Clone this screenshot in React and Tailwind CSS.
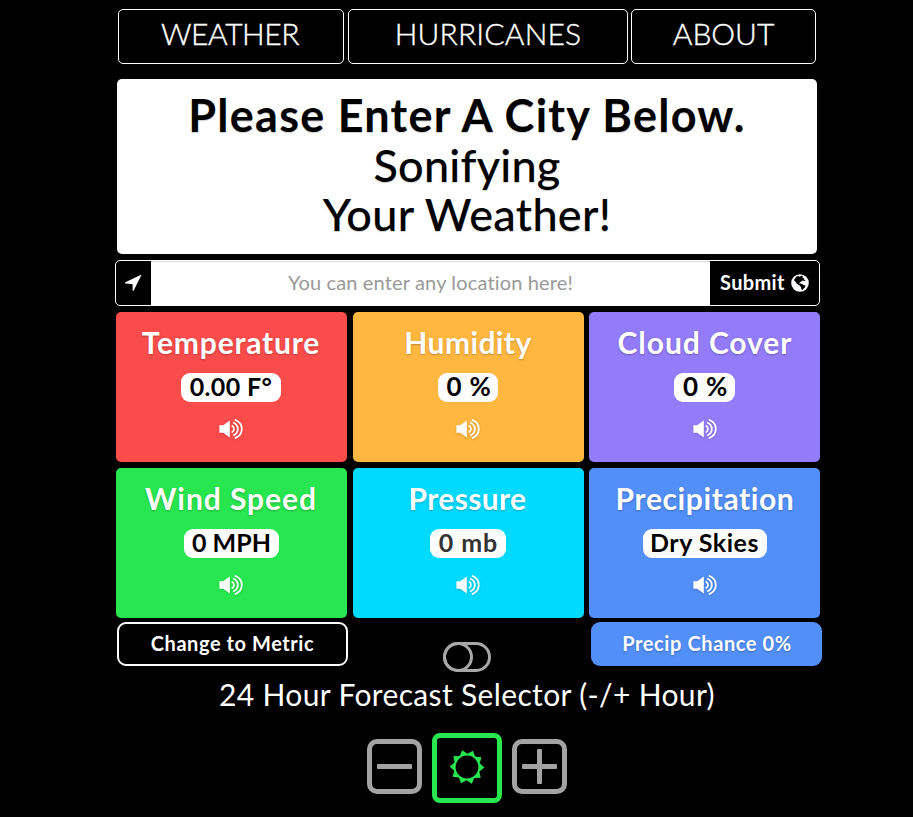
import React from "react";

const SHADOW = "[text-shadow:0_1px_2px_rgba(0,0,0,0.25)]";

function VolumeIcon() {
  return (
    <svg className="mt-[17px] h-5 w-6 drop-shadow-[0_1px_1px_rgba(0,0,0,0.15)]" viewBox="0 0 24 20" fill="none">
      <path d="M0.4 6.2H4.2L10.8 1.6V18.4L4.2 13.8H0.4Z" fill="white" />
      <path d="M12.7 6.6C14.2 7.4 15 8.6 15 10C15 11.4 14.2 12.6 12.7 13.4" stroke="white" strokeWidth="1.7" />
      <path d="M14.2 3.5C17.3 4.8 18.8 7.2 18.8 10C18.8 12.8 17.3 15.2 14.2 16.5" stroke="white" strokeWidth="1.8" />
      <path d="M15.8 0.7C20.5 2.5 22.8 6 22.8 10C22.8 14 20.5 17.5 15.8 19.3" stroke="white" strokeWidth="1.8" />
    </svg>
  );
}

function ArrowIcon() {
  return (
    <svg className="h-[18px] w-[18px]" viewBox="0 0 18 18" fill="white">
      <path d="M16.6 0.9C17.1 0.7 17.4 1 17.2 1.5L9.7 16.5C9.3 17.2 8.6 17 8.6 16.3V10.7C8.6 10.3 8.2 9.9 7.8 9.9L1.6 9.4C0.9 9.3 0.8 8.6 1.4 8.3Z" />
    </svg>
  );
}

function GlobeIcon() {
  return (
    <svg className="mt-px ml-[6px] h-[18px] w-[18px]" viewBox="0 0 18 18">
      <circle cx="9" cy="9" r="8.8" fill="white" />
      <path
        fill="black"
        d="M3.4 5.2L5.6 2.6L7.6 2.1L8.6 3L10 1.8L12.2 1.9L11.2 3.2L12.6 4L13 5.4L14.6 6.4L13.4 7L11.6 6.4L10.3 7.6L9 8.3L8.2 9.4L9.6 9.6L11.2 9.9L12.6 11L14.6 11.8L13.9 13.6L12.3 14.8L11.4 16.2L10.2 14.8L9.9 13L8.6 11.6L7 10.4L5.4 9.3L4.4 7.6L3.2 6.8Z"
      />
    </svg>
  );
}

function SunIcon() {
  const points = Array.from({ length: 20 }, (_, i) => {
    const angle = ((2 + i * 18) * Math.PI) / 180;
    const r = i % 2 === 0 ? 17.4 : 13.2;
    return `${(18 + r * Math.cos(angle)).toFixed(2)} ${(18 + r * Math.sin(angle)).toFixed(2)}`;
  });
  return (
    <svg className="mb-[3px] h-9 w-9" viewBox="0 0 36 36">
      <path d={`M${points.join("L")}Z`} fill="#28e64f" />
      <circle cx="18" cy="18" r="11.4" fill="black" />
    </svg>
  );
}

const cards = [
  { title: "Temperature", value: "0.00 F°", bg: "bg-[#fb4c4c] pr-px", track: "tracking-[0.8px]", pill: "w-[100px] tracking-[0.38px]" },
  { title: "Humidity", value: "0 %", bg: "bg-[#ffb740]", track: "tracking-[0.4px]", pill: "w-[60px] pl-[2px] text-[26px] tracking-[0.7px]" },
  { title: "Cloud Cover", value: "0 %", bg: "bg-[#937cf9]", track: "tracking-[0.93px] pl-px", pill: "w-[61px] pl-[2px] text-[26px] tracking-[0.7px]" },
  { title: "Wind Speed", value: "0 MPH", bg: "bg-[#28e64f] pr-px", track: "tracking-[0.94px]", pill: "w-[95px] pl-px tracking-[0.05px]" },
  { title: "Pressure", value: "0 mb", bg: "bg-[#00dafe]", track: "tracking-[0.35px] pr-px", pill: "w-[76px] pl-px tracking-[0.95px] text-[#333]" },
  { title: "Precipitation", value: "Dry Skies", bg: "bg-[#538ff9]", track: "tracking-[0.6px] pl-px", pill: "w-[124px] tracking-[0.5px]" },
];

function Card({ title, value, bg, track, pill }) {
  return (
    <section className={`flex h-[150px] flex-col items-center rounded-[5px] pt-[14px] ${bg}`}>
      <h2 className={`text-[30px] leading-[33px] font-bold text-white ${track} ${SHADOW}`}>{title}</h2>
      <div className="mt-[14px] h-[29px] text-[25px]">
        <div className={`h-[29px] rounded-[9px] bg-white text-center leading-[27px] font-bold whitespace-nowrap ${pill}`}>{value}</div>
      </div>
      <VolumeIcon />
    </section>
  );
}

export default function App() {
  return (
    <div className="flex h-[817px] w-[913px] flex-col overflow-hidden bg-black pl-[115px] font-['Lato',sans-serif] text-black">
      <nav className="mt-[9px] ml-[3px] flex text-center text-[30px] leading-9 font-light text-white [-webkit-text-stroke:0.4px_white]">
        <a className="h-[55px] w-[226px] rounded-[5px] border border-white pt-[5px] pr-[2px] tracking-[-0.45px]">WEATHER</a>
        <a className="ml-1 h-[55px] w-[280px] rounded-[5px] border border-white pt-[5px] tracking-[0.2px]">HURRICANES</a>
        <a className="ml-[3px] h-[55px] w-[185px] rounded-[5px] border border-white pt-[5px]">ABOUT</a>
      </nav>

      <header className="mt-[15px] ml-[2px] h-[175px] w-[700px] rounded-[5px] bg-white pt-[12px] text-center text-[45px] leading-[49.5px] font-medium [text-shadow:0_1px_1px_rgba(0,0,0,0.2)]">
        <h1 className="font-bold tracking-[1.25px]">Please Enter A City Below.</h1>
        <p className="tracking-[0.25px]">Sonifying</p>
        <p className="tracking-[0.3px]">Your Weather!</p>
      </header>

      <form className="mt-[6px] flex h-[46px] w-[705px] overflow-hidden rounded-[5px] border border-white bg-black">
        <button type="button" className="flex w-[35px] items-center justify-center pr-[2px]">
          <ArrowIcon />
        </button>
        <div className="w-[559px] bg-white text-center text-[20px] leading-[43px] tracking-[0.15px] text-[#999] shadow-[inset_0_1px_1px_rgba(0,0,0,0.15)]">
          You can enter any location here!
        </div>
        <button type="button" className="flex items-center pb-[2px] pl-[10px] text-[20px] leading-[42px] font-bold tracking-[0.35px] text-white">
          Submit
          <GlobeIcon />
        </button>
      </form>

      <main className="mt-[6px] ml-px grid w-[704px] grid-cols-[231px_231px_231px] justify-between gap-y-[6px]">
        {cards.map((card) => (
          <Card key={card.title} {...card} />
        ))}
      </main>

      <div className="mt-1 ml-[2px] flex w-[705px] text-center text-[20px] font-bold text-white">
        <button type="button" className="h-11 w-[231px] rounded-[9px] border-2 border-white pb-[2px] leading-[36px] tracking-[0.57px]">
          Change to Metric
        </button>
        <svg className="mt-5 mr-[100px] ml-[95px] h-[30px] w-12" viewBox="0 0 48 30" fill="none" stroke="#a8a8a8" strokeWidth="3">
          <rect x="1.5" y="1.5" width="45" height="27" rx="13.5" />
          <circle cx="15" cy="15" r="13.5" />
        </svg>
        <div className={`h-11 w-[231px] rounded-[9px] bg-[#538ff9] pl-px leading-[42px] tracking-[0.6px] ${SHADOW}`}>Precip Chance 0%</div>
      </div>

      <h3 className="mt-1 ml-[2px] h-9 w-[700px] text-center text-[30px] leading-9 font-normal tracking-[0.35px] text-white">
        24 Hour Forecast Selector (-/+ Hour)
      </h3>

      <div className="mt-[21px] ml-[2px] flex w-[700px] items-start justify-center gap-[10px]">
        <button type="button" className="mt-[6px] flex h-[55px] w-[55px] items-center justify-center rounded-[10px] border-5 border-[#a3a3a3]">
          <svg className="h-[35px] w-[35px]" viewBox="0 0 35 35" fill="#a3a3a3">
            <rect y="15" width="35" height="5" rx="1" />
          </svg>
        </button>
        <div className="flex h-[70px] w-[70px] items-center justify-center rounded-[8px] border-5 border-[#28e64f]">
          <SunIcon />
        </div>
        <button type="button" className="mt-[6px] flex h-[55px] w-[55px] items-center justify-center rounded-[10px] border-5 border-[#a3a3a3]">
          <svg className="h-[35px] w-[35px]" viewBox="0 0 35 35" fill="#a3a3a3">
            <rect y="15" width="35" height="5" rx="1" />
            <rect x="15" width="5" height="35" rx="1" />
          </svg>
        </button>
      </div>
    </div>
  );
}
